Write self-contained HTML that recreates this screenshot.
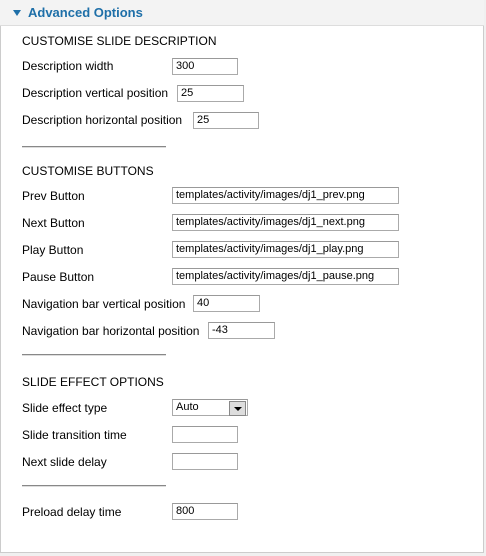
<!DOCTYPE html><html><head><style>
body{margin:0;width:486px;height:556px;background:#f0f0f0;font-family:"Liberation Sans",Arial,sans-serif;font-size:12px;color:#000;position:relative;overflow:hidden}
.panel{position:absolute;left:0;top:0;width:482px;height:552px;background:#fff;border:1px solid #ccc;border-top:none}
.hdr{position:absolute;left:0;top:0;width:484px;height:25px;background:#f3f3f3;border-bottom:1px solid #ddd}
.hdr span{position:absolute;left:28px;top:5px;color:#1e6fa8;font-weight:bold;font-size:13px}
.tri{position:absolute;left:13px;top:10px;width:0;height:0;border-left:4px solid transparent;border-right:4px solid transparent;border-top:6px solid #1e6fa8}
.t{position:absolute;left:22px;white-space:nowrap}
.i{position:absolute;height:15px;border:1px solid #aaa;border-top-color:#999;background:#fff;font-size:11px;line-height:15px;padding-left:3px;box-sizing:content-box}
.hr{position:absolute;left:22px;width:144px;height:0;border-top:1px solid #888;border-bottom:1px solid #ddd}
</style></head><body>
<div class="panel"></div>
<div class="hdr"><div class="tri"></div><span>Advanced Options</span></div>
<div class="t" style="top:34px">CUSTOMISE SLIDE DESCRIPTION</div>
<div class="t" style="top:59px">Description width</div><div class="i" style="left:172px;top:58px;width:61px">300</div>
<div class="t" style="top:86px">Description vertical position</div><div class="i" style="left:177px;top:85px;width:62px">25</div>
<div class="t" style="top:113px">Description horizontal position</div><div class="i" style="left:193px;top:112px;width:61px">25</div>
<div class="hr" style="top:146px"></div>
<div class="t" style="top:164px">CUSTOMISE BUTTONS</div>
<div class="t" style="top:189px">Prev Button</div><div class="i" style="left:172px;top:187px;width:222px">templates/activity/images/dj1_prev.png</div>
<div class="t" style="top:216px">Next Button</div><div class="i" style="left:172px;top:214px;width:222px">templates/activity/images/dj1_next.png</div>
<div class="t" style="top:243px">Play Button</div><div class="i" style="left:172px;top:241px;width:222px">templates/activity/images/dj1_play.png</div>
<div class="t" style="top:270px">Pause Button</div><div class="i" style="left:172px;top:268px;width:222px">templates/activity/images/dj1_pause.png</div>
<div class="t" style="top:297px">Navigation bar vertical position</div><div class="i" style="left:193px;top:295px;width:62px">40</div>
<div class="t" style="top:324px">Navigation bar horizontal position</div><div class="i" style="left:208px;top:322px;width:62px">-43</div>
<div class="hr" style="top:354px"></div>
<div class="t" style="top:375px">SLIDE EFFECT OPTIONS</div>
<div class="t" style="top:401px">Slide effect type</div>
<div class="i" style="left:172px;top:399px;width:71px">Auto<div style="position:absolute;right:1px;top:1px;width:15px;height:13px;background:#ddd;border:1px solid #888"><div style="position:absolute;left:4px;top:5px;border-left:4px solid transparent;border-right:4px solid transparent;border-top:4px solid #000;width:0;height:0"></div></div></div>
<div class="t" style="top:428px">Slide transition time</div><div class="i" style="left:172px;top:426px;width:61px"></div>
<div class="t" style="top:455px">Next slide delay</div><div class="i" style="left:172px;top:453px;width:61px"></div>
<div class="hr" style="top:485px"></div>
<div class="t" style="top:505px">Preload delay time</div><div class="i" style="left:172px;top:503px;width:61px">800</div>
</body></html>
